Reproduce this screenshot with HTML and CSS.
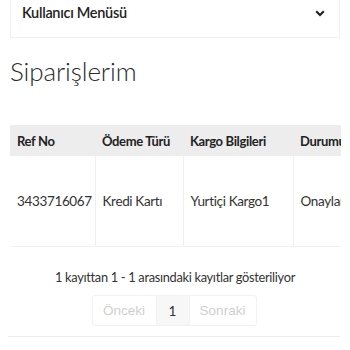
FILE: index.html
```html
<!DOCTYPE html>
<html lang="tr">
<head>
<meta charset="utf-8">
<link rel="stylesheet" href="styles.css">
</head>
<body>
<div class="page">
  <div class="menu-card">
    <span class="menu-title">Kullanıcı Menüsü</span>
    <svg class="chevron" width="10" height="7" viewBox="0 0 10 7"><path d="M1.2 1.3 L5 5 L8.8 1.3" fill="none" stroke="#222" stroke-width="2.2"/></svg>
  </div>
  <h1 class="title">Siparişlerim</h1>
  <div class="table-wrap">
    <table class="orders">
      <thead>
        <tr><th class="c1">Ref No</th><th class="c2">Ödeme Türü</th><th class="c3">Kargo Bilgileri</th><th class="c4">Durumu</th></tr>
      </thead>
      <tbody>
        <tr><td>3433716067</td><td>Kredi Kartı</td><td>Yurtiçi Kargo1</td><td>Onaylandı</td></tr>
      </tbody>
    </table>
  </div>
  <p class="info">1 kayıttan 1 - 1 arasındaki kayıtlar gösteriliyor</p>
  <div class="pager-row">
    <div class="pager">
      <span class="pg prev">Önceki</span>
      <span class="pg num">1</span>
      <span class="pg next">Sonraki</span>
    </div>
  </div>
  <div class="rule"></div>
</div>
</body>
</html>
```
FILE: styles.css
```css
html, body { margin: 0; padding: 0; background: #fff; }
body { font-family: "Lato", "Liberation Sans", sans-serif; color: #222; }
.page { padding: 0 10px; }
.menu-card {
  height: 38px;
  box-sizing: border-box;
  border: 1px solid #f0f0f0;
  border-top: none;
  display: flex;
  align-items: flex-start;
  justify-content: space-between;
  padding: 5px 14px 0 11px;
}
.menu-title { font-size: 14.5px; font-weight: 600; line-height: 16px; color: #222; letter-spacing: -0.3px; }
.chevron { margin-top: 5px; }
.title {
  margin: 18px 0 0;
  font-size: 26px;
  font-weight: 300;
  line-height: 30px;
  color: #2a2a2a;
  letter-spacing: -0.1px;
}
.table-wrap { margin-top: 39px; width: 331px; overflow: hidden; }
.orders { border-collapse: collapse; width: 360px; table-layout: fixed; }
.orders th, .orders td { text-align: left; padding: 0 7px; font-size: 13.5px; white-space: nowrap; overflow: hidden; letter-spacing: -0.35px; }
.orders th { background: #ededed; height: 31px; font-weight: 700; color: #222; font-size: 13px; }
.orders td { height: 90px; border: 1px solid #f0f0f0; border-top: none; color: #333; }
.orders td:first-child { border-left: none; }
.c1 { width: 71px; } .c2 { width: 74px; } .c3 { width: 96px; } .c4 { width: 63px; }
.info { margin: 22px 0 0; text-align: center; font-size: 12.8px; line-height: 16px; color: #333; letter-spacing: -0.3px; }
.pager-row { display: flex; justify-content: center; margin-top: 10px; }
.pager { display: flex; border: 1px solid #f2f2f2; border-radius: 3px; height: 31px; box-sizing: border-box; margin-left: -2px; }
.pg { display: flex; align-items: center; justify-content: center; font-size: 13.5px; }
.prev, .next { font-family: "Liberation Sans", sans-serif; color: #d0d0d0; font-size: 13.5px; }
.prev { width: 63px; }
.num { width: 32px; background: #f7f7f7; color: #333; border-left: 1px solid #f2f2f2; border-right: 1px solid #f2f2f2; }
.next { width: 66px; }
.rule { margin: 10px 0 0 -2px; border-top: 1px solid #eee; width: 332px; }
```
